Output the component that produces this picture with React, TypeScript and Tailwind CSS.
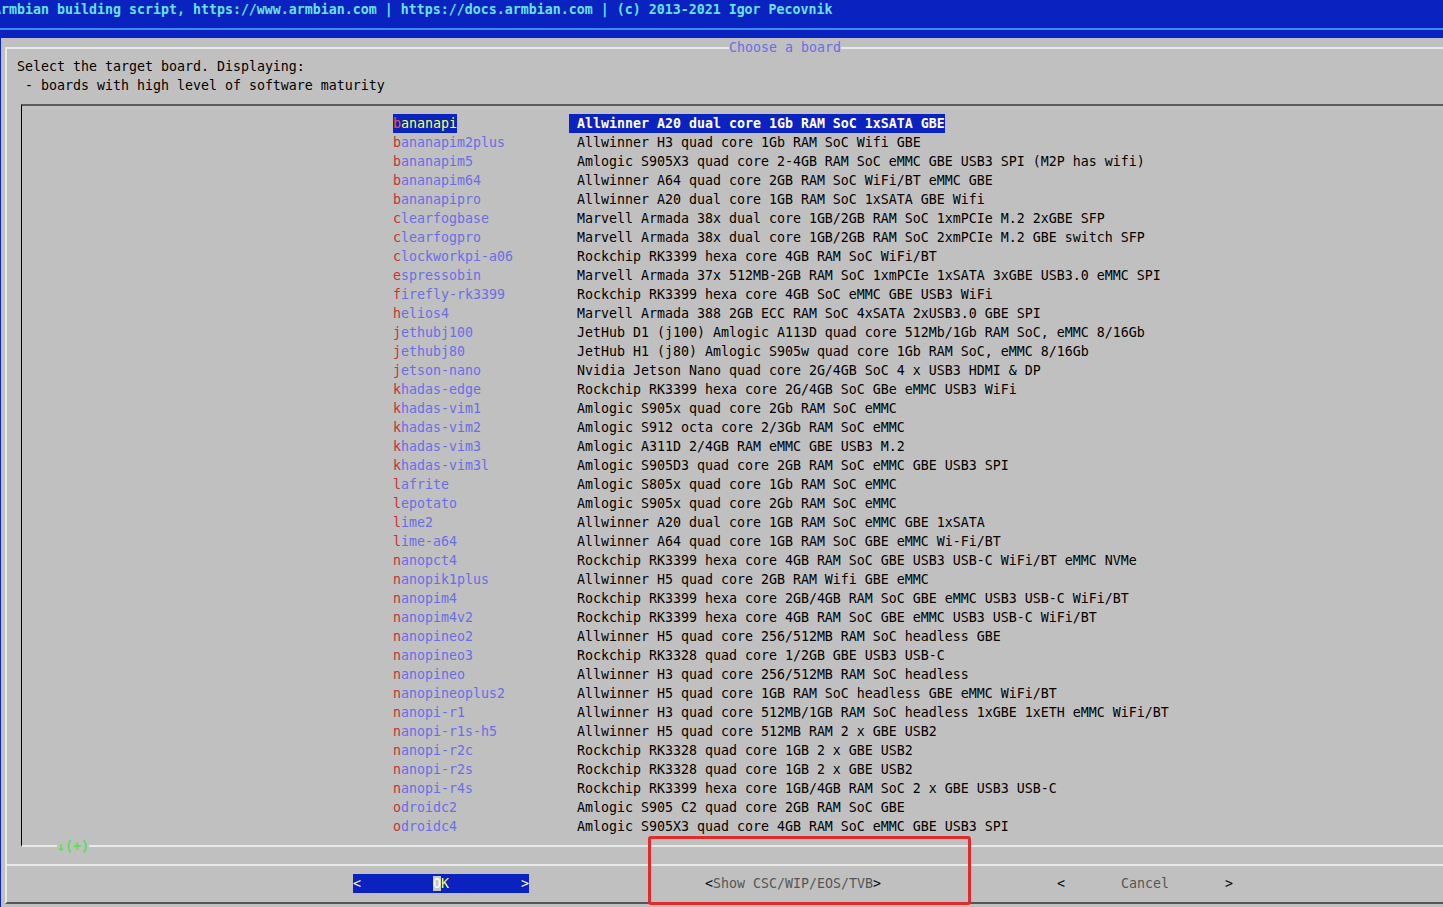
import React from 'react';

interface Board {
  name: string;
  description: string;
}

const boards: Board[] = [
  { name: "bananapi", description: "Allwinner A20 dual core 1Gb RAM SoC 1xSATA GBE" },
  { name: "bananapim2plus", description: "Allwinner H3 quad core 1Gb RAM SoC Wifi GBE" },
  { name: "bananapim5", description: "Amlogic S905X3 quad core 2-4GB RAM SoC eMMC GBE USB3 SPI (M2P has wifi)" },
  { name: "bananapim64", description: "Allwinner A64 quad core 2GB RAM SoC WiFi/BT eMMC GBE" },
  { name: "bananapipro", description: "Allwinner A20 dual core 1GB RAM SoC 1xSATA GBE Wifi" },
  { name: "clearfogbase", description: "Marvell Armada 38x dual core 1GB/2GB RAM SoC 1xmPCIe M.2 2xGBE SFP" },
  { name: "clearfogpro", description: "Marvell Armada 38x dual core 1GB/2GB RAM SoC 2xmPCIe M.2 GBE switch SFP" },
  { name: "clockworkpi-a06", description: "Rockchip RK3399 hexa core 4GB RAM SoC WiFi/BT" },
  { name: "espressobin", description: "Marvell Armada 37x 512MB-2GB RAM SoC 1xmPCIe 1xSATA 3xGBE USB3.0 eMMC SPI" },
  { name: "firefly-rk3399", description: "Rockchip RK3399 hexa core 4GB SoC eMMC GBE USB3 WiFi" },
  { name: "helios4", description: "Marvell Armada 388 2GB ECC RAM SoC 4xSATA 2xUSB3.0 GBE SPI" },
  { name: "jethubj100", description: "JetHub D1 (j100) Amlogic A113D quad core 512Mb/1Gb RAM SoC, eMMC 8/16Gb" },
  { name: "jethubj80", description: "JetHub H1 (j80) Amlogic S905w quad core 1Gb RAM SoC, eMMC 8/16Gb" },
  { name: "jetson-nano", description: "Nvidia Jetson Nano quad core 2G/4GB SoC 4 x USB3 HDMI & DP" },
  { name: "khadas-edge", description: "Rockchip RK3399 hexa core 2G/4GB SoC GBe eMMC USB3 WiFi" },
  { name: "khadas-vim1", description: "Amlogic S905x quad core 2Gb RAM SoC eMMC" },
  { name: "khadas-vim2", description: "Amlogic S912 octa core 2/3Gb RAM SoC eMMC" },
  { name: "khadas-vim3", description: "Amlogic A311D 2/4GB RAM eMMC GBE USB3 M.2" },
  { name: "khadas-vim3l", description: "Amlogic S905D3 quad core 2GB RAM SoC eMMC GBE USB3 SPI" },
  { name: "lafrite", description: "Amlogic S805x quad core 1Gb RAM SoC eMMC" },
  { name: "lepotato", description: "Amlogic S905x quad core 2Gb RAM SoC eMMC" },
  { name: "lime2", description: "Allwinner A20 dual core 1GB RAM SoC eMMC GBE 1xSATA" },
  { name: "lime-a64", description: "Allwinner A64 quad core 1GB RAM SoC GBE eMMC Wi-Fi/BT" },
  { name: "nanopct4", description: "Rockchip RK3399 hexa core 4GB RAM SoC GBE USB3 USB-C WiFi/BT eMMC NVMe" },
  { name: "nanopik1plus", description: "Allwinner H5 quad core 2GB RAM Wifi GBE eMMC" },
  { name: "nanopim4", description: "Rockchip RK3399 hexa core 2GB/4GB RAM SoC GBE eMMC USB3 USB-C WiFi/BT" },
  { name: "nanopim4v2", description: "Rockchip RK3399 hexa core 4GB RAM SoC GBE eMMC USB3 USB-C WiFi/BT" },
  { name: "nanopineo2", description: "Allwinner H5 quad core 256/512MB RAM SoC headless GBE" },
  { name: "nanopineo3", description: "Rockchip RK3328 quad core 1/2GB GBE USB3 USB-C" },
  { name: "nanopineo", description: "Allwinner H3 quad core 256/512MB RAM SoC headless" },
  { name: "nanopineoplus2", description: "Allwinner H5 quad core 1GB RAM SoC headless GBE eMMC WiFi/BT" },
  { name: "nanopi-r1", description: "Allwinner H3 quad core 512MB/1GB RAM SoC headless 1xGBE 1xETH eMMC WiFi/BT" },
  { name: "nanopi-r1s-h5", description: "Allwinner H5 quad core 512MB RAM 2 x GBE USB2" },
  { name: "nanopi-r2c", description: "Rockchip RK3328 quad core 1GB 2 x GBE USB2" },
  { name: "nanopi-r2s", description: "Rockchip RK3328 quad core 1GB 2 x GBE USB2" },
  { name: "nanopi-r4s", description: "Rockchip RK3399 hexa core 1GB/4GB RAM SoC 2 x GBE USB3 USB-C" },
  { name: "odroidc2", description: "Amlogic S905 C2 quad core 2GB RAM SoC GBE" },
  { name: "odroidc4", description: "Amlogic S905X3 quad core 4GB RAM SoC eMMC GBE USB3 SPI" },
];

const App = () => {
  const selected = 0;

  return (
    <div className="relative w-[1443px] h-[907px] overflow-hidden bg-[#c0c0c0] font-['DejaVu_Sans_Mono','Liberation_Mono',monospace] text-[13.29px] leading-[19px] whitespace-pre">
      {/* backtitle */}
      <div className="h-[38px] bg-[#0a22c0]">
        <div className="h-[19px] -ml-[7px] font-bold text-[#68e2f2]">
          Armbian building script, https://www.armbian.com | https://docs.armbian.com | (c) 2013-2021 Igor Pecovnik
        </div>
        <div className="mt-[9px] h-[2px] bg-[#3f8cf2]"></div>
      </div>

      <div className="flex">
        <div className="w-[1px] h-[869px] shrink-0 bg-[#0a22c0]"></div>
        <div className="flex-1 min-w-0 pl-[4px] pt-[9px]">
          {/* dialog */}
          <div className="relative border-l-2 border-t-2 border-b-2 border-l-[#e8e8e8] border-t-[#e8e8e8] border-b-[#555555] pt-[8px] pb-[9px]">
            <div className="absolute -top-[11px] left-[722px] h-[19px] bg-[#c0c0c0] text-[#6a6ee2]">Choose a board</div>

            <div className="pl-[10px] text-black">
              <div className="h-[19px]">Select the target board. Displaying:</div>
              <div className="h-[19px]"> - boards with high level of software maturity</div>
            </div>

            {/* list box */}
            <div className="relative mt-[9px] ml-[14px] border-l border-t-2 border-b-2 border-l-black border-t-[#5c5c5c] border-b-[#e8e8e8] pt-[8px] pb-[9px]">
              {boards.map((board, index) => {
                const isSel = index === selected;
                return (
                  <div key={board.name} className="flex h-[19px]">
                    <div className="w-[371px] shrink-0"></div>
                    <div className="w-[176px] shrink-0">
                      <span className={isSel ? "inline-block h-[19px] bg-[#0a22c0]" : "inline-block h-[19px]"}>
                        <span className={isSel ? "text-[#ff4a4a]" : "text-[#c83232]"}>{board.name[0]}</span>
                        <span className={isSel ? "text-[#ffff5a]" : "text-[#6a6ee6]"}>{board.name.slice(1)}</span>
                      </span>
                    </div>
                    <span className={isSel ? "inline-block h-[19px] bg-[#0a22c0] text-white font-bold" : "inline-block h-[19px] text-black"}>
                      {" " + board.description}
                    </span>
                  </div>
                );
              })}
              <div className="absolute left-[35px] -bottom-[11px] h-[19px] bg-[#c0c0c0] font-bold text-[#55e055]">↓(+)</div>
            </div>

            <div className="mt-[17px] h-[2px] bg-[#e8e8e8]"></div>

            {/* buttons */}
            <div className="mt-[8px] flex h-[19px] gap-[176px] pl-[346px]">
              <div className="w-[176px] shrink-0 bg-[#0a22c0] text-white">
                {"<         "}
                <span className="bg-[#c8c8c8] text-white">O</span>
                <span className="text-[#ffff5a]">K</span>
                {"         >"}
              </div>
              <div className="w-[176px] shrink-0 text-black">
                {"<"}
                <span className="text-[#555555]">Show CSC/WIP/EOS/TVB</span>
                {">"}
              </div>
              <div className="w-[176px] shrink-0 text-black">
                {"<       "}
                <span className="text-[#555555]">Cancel</span>
                {"       >"}
              </div>
            </div>
          </div>
        </div>
      </div>

      {/* annotation box */}
      <div className="absolute left-[648px] top-[836px] w-[323px] h-[69px] rounded-[3px] border-[3px] border-[#e02b2b]"></div>
    </div>
  );
};

export default App;
